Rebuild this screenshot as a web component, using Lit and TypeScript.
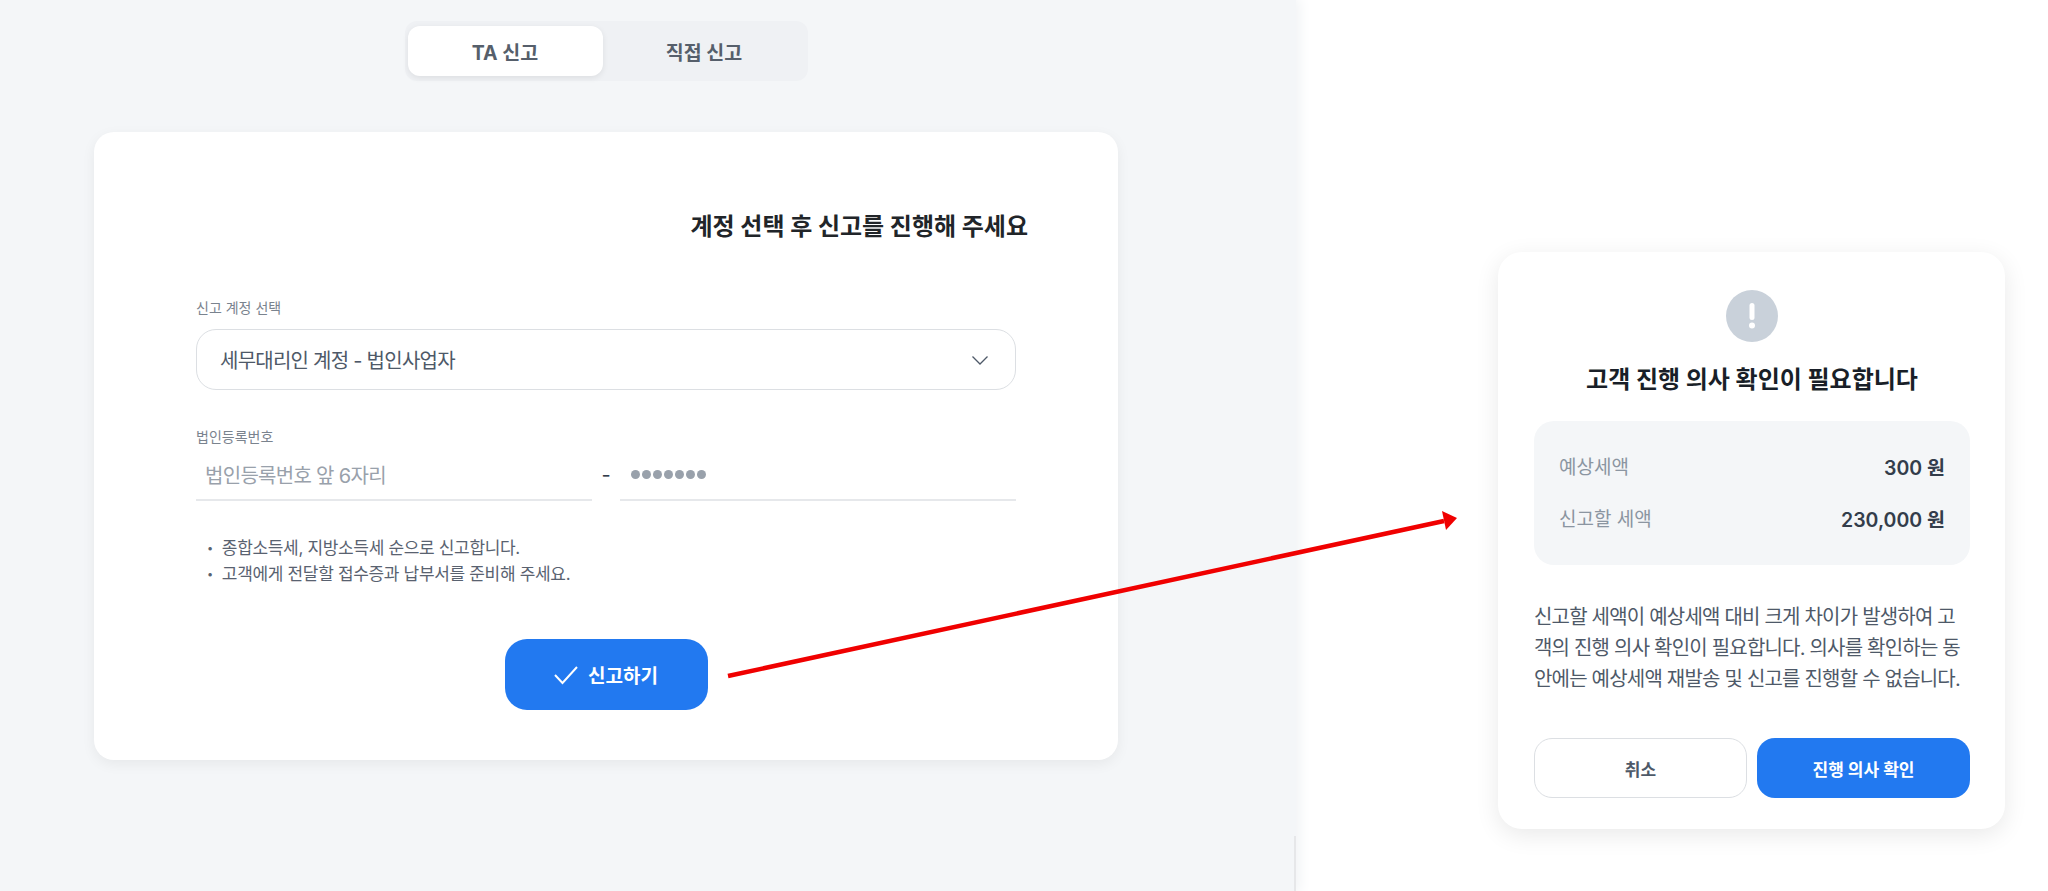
import { LitElement, html, css } from 'lit';
import { customElement } from 'lit/decorators.js';

@customElement('app-root')
export class AppRoot extends LitElement {
  static styles = css`
    :host {
      display: block;
      position: relative;
      width: 2048px;
      height: 891px;
      overflow: hidden;
      background: #fff;
      font-family: 'Inter', 'Noto Sans CJK KR', sans-serif;
      color: #191f28;
    }

    .page {
      display: flex;
      height: 891px;
    }

    .left {
      position: relative;
      box-sizing: border-box;
      width: 1296px;
      height: 891px;
      flex: none;
      padding: 21px 178px 0 94px;
      background: #f4f6f8;
      box-shadow: 2px 0 12px 2px #f1f3f5;
      display: flex;
      flex-direction: column;
      align-items: center;
    }

    .left::after {
      content: '';
      position: absolute;
      right: 0;
      top: 836px;
      bottom: 0;
      width: 2px;
      background: #e6e7e9;
    }

    .tabs {
      display: flex;
      box-sizing: border-box;
      width: 403px;
      height: 60px;
      padding: 5px 2px 5px 3px;
      background: #eff1f4;
      border-radius: 12px;
    }

    .tab {
      flex: 1;
      display: flex;
      align-items: center;
      justify-content: center;
      border-radius: 12px;
      font-size: 19.5px;
      font-weight: 700;
      color: #565f6b;
    }

    .tab.active {
      flex: none;
      width: 195px;
      background: #fff;
      box-shadow: 0 2px 6px rgba(0, 0, 0, 0.08);
    }

    .card {
      box-sizing: border-box;
      width: 1024px;
      height: 628px;
      margin-top: 51px;
      padding: 77px 102px 0;
      background: #fff;
      border-radius: 20px;
      box-shadow: 0 4px 14px rgba(0, 0, 0, 0.06);
    }

    .heading {
      margin: 0 -12px 0 0;
      text-align: right;
      font-size: 24px;
      line-height: 36px;
      font-weight: 700;
      color: #212529;
    }

    .label {
      font-size: 14px;
      line-height: 20px;
      color: #7a838e;
    }

    .label.first {
      margin-top: 53px;
    }

    .select {
      display: flex;
      align-items: center;
      justify-content: space-between;
      box-sizing: border-box;
      height: 61px;
      margin-top: 11px;
      padding: 0 26px 0 23px;
      border: 1px solid #dcdfe3;
      border-radius: 20px;
      font-size: 20px;
      letter-spacing: -0.75px;
      color: #4e5968;
    }

    .label.second {
      margin-top: 37px;
    }

    .fields {
      display: flex;
      align-items: center;
      height: 52px;
      margin-top: 2px;
    }

    .field {
      flex: 1;
      box-sizing: border-box;
      height: 52px;
      padding-left: 9px;
      display: flex;
      align-items: center;
      border-bottom: 2px solid #e6e8eb;
      font-size: 20px;
      letter-spacing: -0.7px;
      color: #99a1ab;
    }

    .dash {
      width: 28px;
      text-align: center;
      font-size: 20px;
      color: #333d4b;
    }

    .dots {
      display: flex;
      gap: 2px;
      margin-left: 2px;
    }

    .dots i {
      width: 9px;
      height: 9px;
      border-radius: 50%;
      background: #99a1ab;
    }

    .notes {
      margin: 34px 0 0;
      padding: 0 0 0 11px;
      list-style: none;
      font-size: 17px;
      letter-spacing: -0.33px;
      line-height: 26px;
      color: #596270;
    }

    .notes li {
      display: flex;
      gap: 9px;
    }

    .notes li::before {
      content: '•';
      font-size: 11px;
    }

    .submit-row {
      display: flex;
      justify-content: center;
      margin-top: 52px;
    }

    .submit {
      display: flex;
      align-items: center;
      justify-content: center;
      gap: 10px;
      width: 203px;
      height: 71px;
      border-radius: 22px;
      background: #2279f0;
      color: #fff;
      font-size: 19px;
      font-weight: 700;
    }

    .right {
      flex: 1;
      padding: 252px 0 0 202px;
    }

    .modal {
      box-sizing: border-box;
      width: 507px;
      height: 577px;
      padding: 38px 35px 0 36px;
      background: #fff;
      border-radius: 24px;
      box-shadow: 0 6px 24px rgba(0, 0, 0, 0.09);
      display: flex;
      flex-direction: column;
    }

    .alert {
      align-self: center;
      display: block;
    }

    .title {
      margin: 20px 0 0;
      text-align: center;
      font-size: 24px;
      line-height: 36px;
      font-weight: 700;
      color: #191f28;
    }

    .summary {
      box-sizing: border-box;
      height: 144px;
      margin-top: 23px;
      padding: 22px 25px 20px;
      background: #f4f6f8;
      border-radius: 20px;
      display: flex;
      flex-direction: column;
      gap: 22px;
      justify-content: center;
    }

    .row {
      display: flex;
      justify-content: space-between;
      font-size: 19px;
      line-height: 30px;
      color: #8b95a1;
    }

    .row b {
      font-size: 19.5px;
      font-weight: 600;
      color: #333d4b;
    }

    .desc {
      margin: 37px 0 0;
      font-size: 20px;
      line-height: 31px;
      color: #4e5968;
      letter-spacing: -0.8px;
      word-break: break-all;
    }

    .actions {
      display: flex;
      justify-content: space-between;
      margin-top: 43px;
    }

    .btn {
      box-sizing: border-box;
      width: 213px;
      height: 60px;
      display: flex;
      align-items: center;
      justify-content: center;
      border-radius: 18px;
      font-size: 17px;
      font-weight: 700;
    }

    .btn.cancel {
      border: 1px solid #dcdfe3;
      color: #4e5968;
    }

    .btn.confirm {
      background: #2279f0;
      color: #fff;
    }

    .arrow {
      position: absolute;
      left: 0;
      top: 0;
      pointer-events: none;
    }
  `;

  render() {
    return html`
      <div class="page">
        <section class="left">
          <div class="tabs">
            <div class="tab active">TA 신고</div>
            <div class="tab">직접 신고</div>
          </div>
          <div class="card">
            <h2 class="heading">계정 선택 후 신고를 진행해 주세요</h2>
            <div class="label first">신고 계정 선택</div>
            <div class="select">
              <span>세무대리인 계정 - 법인사업자</span>
              <svg width="18" height="18" viewBox="0 0 18 18" fill="none" stroke="#4e5968" stroke-width="1.3">
                <path d="M1.5 5.5L9 13l7.5-7.5" />
              </svg>
            </div>
            <div class="label second">법인등록번호</div>
            <div class="fields">
              <div class="field">법인등록번호 앞 6자리</div>
              <div class="dash">-</div>
              <div class="field">
                <span class="dots"><i></i><i></i><i></i><i></i><i></i><i></i><i></i></span>
              </div>
            </div>
            <ul class="notes">
              <li>종합소득세, 지방소득세 순으로 신고합니다.</li>
              <li>고객에게 전달할 접수증과 납부서를 준비해 주세요.</li>
            </ul>
            <div class="submit-row">
              <div class="submit">
                <svg width="24" height="20" viewBox="0 0 24 20" fill="none" stroke="#fff" stroke-width="2">
                  <path d="M1 10l7.5 8L23 2" />
                </svg>
                신고하기
              </div>
            </div>
          </div>
        </section>
        <section class="right">
          <div class="modal">
            <svg class="alert" width="52" height="52" viewBox="0 0 52 52">
              <circle cx="26" cy="26" r="26" fill="#c9d1da" />
              <rect x="23.5" y="13" width="5" height="17" rx="2.5" fill="#fff" />
              <circle cx="26" cy="35.5" r="3" fill="#fff" />
            </svg>
            <h3 class="title">고객 진행 의사 확인이 필요합니다</h3>
            <div class="summary">
              <div class="row"><span>예상세액</span><b>300 원</b></div>
              <div class="row"><span>신고할 세액</span><b>230,000 원</b></div>
            </div>
            <p class="desc">
              신고할 세액이 예상세액 대비 크게 차이가 발생하여 고객의 진행 의사 확인이 필요합니다. 의사를
              확인하는 동안에는 예상세액 재발송 및 신고를 진행할 수 없습니다.
            </p>
            <div class="actions">
              <div class="btn cancel">취소</div>
              <div class="btn confirm">진행 의사 확인</div>
            </div>
          </div>
        </section>
      </div>
      <svg class="arrow" width="2048" height="891" viewBox="0 0 2048 891">
        <path d="M728 676L1444 521" stroke="#f00000" stroke-width="4.5" fill="none" />
        <path d="M1457 518L1442 511L1446 530Z" fill="#f00000" />
      </svg>
    `;
  }
}

declare global {
  interface HTMLElementTagNameMap {
    'app-root': AppRoot;
  }
}
